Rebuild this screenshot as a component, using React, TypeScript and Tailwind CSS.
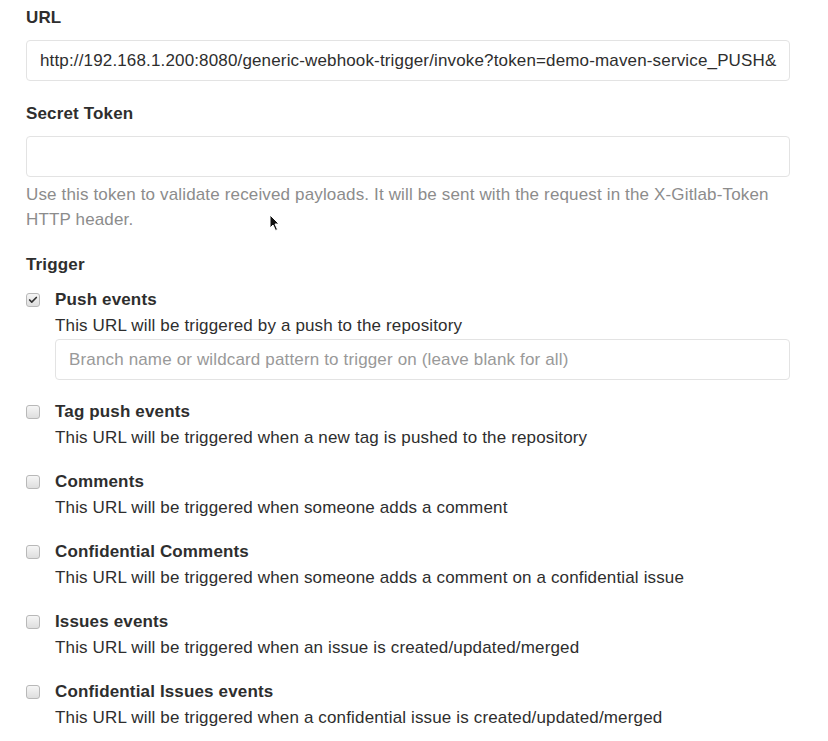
import { Check } from 'lucide-react';

const triggers = [
  { title: 'Push events', desc: 'This URL will be triggered by a push to the repository', checked: true, branch: true },
  { title: 'Tag push events', desc: 'This URL will be triggered when a new tag is pushed to the repository' },
  { title: 'Comments', desc: 'This URL will be triggered when someone adds a comment' },
  { title: 'Confidential Comments', desc: 'This URL will be triggered when someone adds a comment on a confidential issue' },
  { title: 'Issues events', desc: 'This URL will be triggered when an issue is created/updated/merged' },
  { title: 'Confidential Issues events', desc: 'This URL will be triggered when a confidential issue is created/updated/merged' },
];

const Checkbox = ({ checked }: { checked?: boolean }) => (
  <div className="mt-[6px] w-[14px] h-[14px] shrink-0 rounded-[3px] border border-[#b8b8b8] bg-gradient-to-b from-[#f6f6f6] to-[#dedede] flex items-center justify-center">
    {checked && <Check className="w-[10px] h-[10px] text-[#333]" strokeWidth={4} />}
  </div>
);

const Cursor = () => (
  <svg className="absolute left-[269px] top-[214px]" width="12" height="18" viewBox="0 0 12 18">
    <path d="M1 1 L1 14 L4 11 L6.5 16.5 L8.5 15.5 L6 10 L10 10 Z" fill="#111" stroke="#fff" strokeWidth="1" />
  </svg>
);

export default function App() {
  return (
    <div className="relative w-[828px] h-[741px] overflow-hidden bg-white pl-[26px] pr-[38px] pt-[5px] text-[17px] tracking-[0.15px] leading-[26px] text-[#2e2e2e] font-['Liberation_Sans',Arial,sans-serif]">
      <div className="font-bold">URL</div>
      <div className="mt-[9px] h-[41px] rounded-[4px] border border-[#e3e3e3] px-[13px] flex items-center overflow-hidden whitespace-nowrap">
        http://192.168.1.200:8080/generic-webhook-trigger/invoke?token=demo-maven-service_PUSH&amp;
      </div>

      <div className="mt-[20px] font-bold">Secret Token</div>
      <div className="mt-[9px] h-[41px] rounded-[4px] border border-[#e3e3e3]" />
      <p className="mt-[5px] leading-[25px] text-[#8c8c8c]">
        Use this token to validate received payloads. It will be sent with the request in the X-Gitlab-Token
        <br />
        HTTP header.
      </p>

      <div className="mt-[20px] font-bold">Trigger</div>

      <div className="mt-[9px] flex flex-col gap-[18px]">
        {triggers.map((t) => (
          <div key={t.title} className="flex gap-[15px]">
            <Checkbox checked={t.checked} />
            <div className="flex-1">
              <div className="font-bold">{t.title}</div>
              <div>{t.desc}</div>
              {t.branch && (
                <div className="mb-[1px] h-[41px] rounded-[4px] border border-[#e3e3e3] px-[13px] flex items-center text-[#999]">
                  Branch name or wildcard pattern to trigger on (leave blank for all)
                </div>
              )}
            </div>
          </div>
        ))}
      </div>

      <Cursor />
    </div>
  );
}
